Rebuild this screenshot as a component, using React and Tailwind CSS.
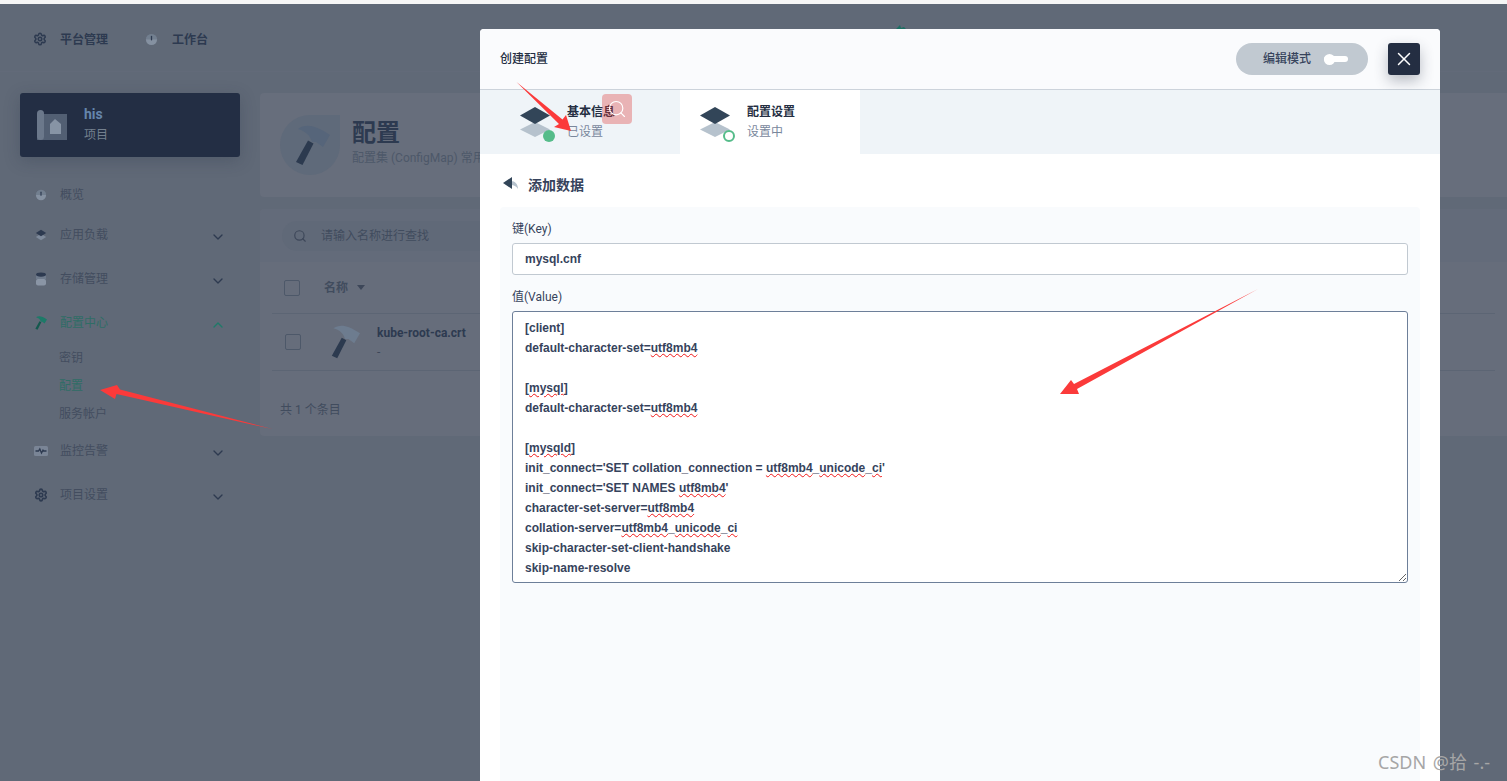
import React from "react";
import { ChevronDown, ChevronUp, Settings, Search, X } from "lucide-react";

const Hammer = ({ className, head = "#6d7c8f", handle = "#2c3a4f" }) => (
  <svg viewBox="0 0 35 41" className={className}>
    <path d="M3 4C10-1 19-1 35 10L28 22 21 17 17 17C15 10 10 6 3 4Z" fill={head} />
    <path d="M13 15.5L18.5 18.500 7.500 40 1 37Z" fill={handle} strokeLinejoin="round" />
  </svg>
);

const Dash = ({ className }) => (
  <svg viewBox="0 0 14 14" className={className}>
    <circle cx="7" cy="7" r="6" fill="#8591a1" />
    <path d="M1 7a6 6 0 0 1 12 0" fill="#4a5568" opacity=".3" />
    <rect x="6.300" y="3" width="1.400" height="5" rx=".7" fill="#2d3a50" />
  </svg>
);

const Layers = ({ className }) => (
  <svg viewBox="0 0 14 14" className={className}>
    <path d="M7 5.500L13 9.200 7 13 1 9.200Z" fill="#7e8a9b" />
    <path d="M7 1L13 4.700 7 8.500 1 4.700Z" fill="#2d3a50" />
  </svg>
);

const Db = ({ className }) => (
  <svg viewBox="0 0 12 14" className={className}>
    <rect x="1" y="7" width="10" height="6.500" rx="2" fill="#8a95a5" />
    <rect x="1" y="3" width="10" height="4" fill="#6f7b8c" />
    <ellipse cx="6" cy="2.600" rx="5" ry="2.100" fill="#2d3a50" />
  </svg>
);

const Pulse = ({ className }) => (
  <svg viewBox="0 0 14 10" className={className}>
    <rect width="14" height="10" rx="1.500" fill="#7a8596" />
    <path d="M1.500 5H4.500L5.800 3 7.500 7 9 4.200 9.800 5H12.500" fill="none" stroke="#2d3a50" strokeWidth="1.300" />
  </svg>
);

const Stack = ({ done }) => (
  <svg viewBox="0 0 38 32" className="w-[38px] h-[32px] shrink-0 overflow-visible">
    <path d="M15 16L30 23.500 15 31 0 23.500Z" fill="#b6c2cd" />
    <path d="M15 1L30 9.500 15 18 0 9.500Z" fill="#324558" />
    {done ? (
      <circle cx="29" cy="30" r="6" fill="#55bc8a" />
    ) : (
      <circle cx="29" cy="30" r="5" fill="#fff" stroke="#55bc8a" strokeWidth="2" />
    )}
  </svg>
);

const NavRow = ({ icon, label, h = "h-10", chevron, active }) => (
  <div className={`${h} flex items-center pl-[13px] pr-[14px]`}>
    <span className="w-[16px] h-[16px] flex items-center justify-center shrink-0">{icon}</span>
    <span className={`ml-[11px] flex-1 text-xs ${active ? "text-[#2f6d66]" : "text-[#434d5f]"}`}>{label}</span>
    {chevron === "down" && <ChevronDown size={16} strokeWidth={2} className="text-[#2d3a50] mt-[3px]" />}
    {chevron === "up" && <ChevronUp size={16} strokeWidth={2} className="text-[#1f7a68] mt-[3px]" />}
  </div>
);

const Sub = ({ label, active }) => (
  <div className={`h-7 flex items-center pl-[39px] text-xs ${active ? "text-[#2f6d66]" : "text-[#434d5f]"}`}>{label}</div>
);

const Err = ({ children }) => (
  <span className="underline decoration-wavy decoration-[#f01818] decoration-1 underline-offset-1">{children}</span>
);

export default function App() {
  return (
    <div className="relative w-[1507px] h-[781px] overflow-hidden bg-[#606977] font-[Roboto,'Noto_Sans_CJK_SC',sans-serif] text-xs">
      <div className="h-[4px] bg-[#f6f6f6]" />

      {/* Top bar */}
      <header className="relative h-[68px] flex items-center pl-[33px] pt-[5px] border-b border-[#626a79]">
        <Settings size={14} strokeWidth={2.6} className="text-[#2d3a50] -mt-[2px]" />
        <span className="ml-[13px] font-bold text-[#2d3a50]">平台管理</span>
        <Dash className="ml-[37px] w-[13px] h-[13px] -mt-[2px]" />
        <span className="ml-[14px] font-bold text-[#2d3a50]">工作台</span>
        <svg viewBox="0 0 12 5" className="absolute left-[895px] top-[21px] w-3 h-[5px]">
          <path d="M0 5L5 0 6 3 9 2 12 5Z" fill="#1d6f63" />
        </svg>
      </header>

      <div className="flex pt-[21px]">
        {/* Sidebar */}
        <aside className="w-[260px] pl-5 pr-5 shrink-0">
          <div className="h-16 rounded-[3px] bg-[#232e44] flex items-center pl-[17px] shadow-[0_4px_16px_rgba(36,46,66,0.25)]">
            <svg viewBox="0 0 30 30" className="w-[30px] h-[30px]">
              <rect x="0" y="4" width="30" height="26" fill="#525f73" />
              <rect x="0" y="0" width="7" height="30" rx="3.500" fill="#6b788b" />
              <path d="M18 9L24 14V24H13V14Z" fill="#8794a5" />
            </svg>
            <div className="ml-[17px] flex flex-col gap-[3px] pb-1">
              <span className="text-sm font-bold leading-5 text-[#6585ac]">his</span>
              <span className="leading-4 text-[#74808f]">项目</span>
            </div>
          </div>
          <nav className="mt-[18px]">
            <NavRow icon={<Dash className="w-3 h-3" />} label="概览" />
            <NavRow icon={<Layers className="w-3 h-3" />} label="应用负载" chevron="down" />
            <div className="h-0.5" />
            <NavRow icon={<Db className="w-3 h-[14px]" />} label="存储管理" h="h-11" chevron="down" />
            <NavRow icon={<Hammer className="w-3 h-[14px]" head="#1d7a68" handle="#14594e" />} label="配置中心" h="h-11" chevron="up" active />
            <div className="-mt-px">
              <Sub label="密钥" />
              <Sub label="配置" active />
              <Sub label="服务帐户" />
            </div>
            <div className="h-px" />
            <NavRow icon={<Pulse className="w-[14px] h-[10px]" />} label="监控告警" h="h-11" chevron="down" />
            <NavRow icon={<Settings size={14} strokeWidth={2.8} className="text-[#2d3a50]" />} label="项目设置" h="h-11" chevron="down" />
          </nav>
        </aside>

        {/* Main */}
        <main className="flex-1 min-w-0">
          <section className="h-[104px] rounded-l-[4px] bg-[#676e7c] flex pl-5">
            <div className="mt-[22px] w-[60px] h-[60px] rounded-full rounded-tr-none bg-[#5f6a7a] flex items-center justify-center">
              <Hammer className="w-[35px] h-[41px] ml-[4px]" head="#56657a" />
            </div>
            <div className="ml-3 mt-6 flex flex-col">
              <span className="text-2xl leading-8 font-bold text-[#2d3a50]">配置</span>
              <span className="mt-px leading-4 text-[#4d5869]">配置集 (ConfigMap) 常用于存储工作负载所需的配置信息</span>
            </div>
          </section>

          <section className="mt-3 h-[227px] rounded-l-[4px] bg-[#666d7b] flex flex-col">
            <div className="h-[53px] flex items-center px-[22px] bg-[#636b7a] rounded-tl-[4px]">
              <div className="w-[400px] h-[30px] rounded-full bg-[#606978] flex items-center pl-[11px]">
                <Search size={14} className="text-[#3d4759]" />
                <span className="ml-[14px] text-[#414c5e]">请输入名称进行查找</span>
              </div>
            </div>
            <div className="h-[52px] flex items-center mx-3 border-b border-[#5c6574]">
              <span className="ml-3 w-4 h-4 rounded-[2px] border border-[#4d5869]" />
              <span className="ml-6 font-bold text-[#414c5e]">名称</span>
              <span className="ml-[9px] w-0 h-0 border-x-4 border-x-transparent border-t-[5px] border-t-[#3d4759]" />
            </div>
            <div className="h-[57px] flex items-center mx-3 border-b border-[#5c6574]">
              <span className="ml-[13px] w-4 h-4 rounded-[2px] border border-[#4d5869]" />
              <Hammer className="ml-[30px] w-[29px] h-[34px]" />
              <div className="ml-[17px] flex flex-col gap-[3px]">
                <span className="font-bold leading-4 text-[#2d3a50]">kube-root-ca.crt</span>
                <span className="leading-4 text-[#3d4759]">-</span>
              </div>
            </div>
            <div className="flex-1 flex items-center pl-5 pt-3 text-[#414c5e]">共 1 个条目</div>
          </section>
        </main>
      </div>

      {/* Create config modal */}
      <div className="absolute left-[480px] top-[29px] bottom-0 w-[960px] rounded-t-[4px] bg-white flex flex-col overflow-hidden">
        <div className="h-[61px] shrink-0 bg-[#fafbfd] border-b border-[#ccd3db] flex items-center pl-5 pr-5">
          <span className="flex-1 text-[#242e42] font-medium">创建配置</span>
          <div className="w-[132px] h-8 rounded-full bg-[#c1c9d1] flex items-center pl-[27px]">
            <span className="text-[#36435c] font-medium">编辑模式</span>
            <span className="relative ml-[13px] w-6 h-[6px] rounded-full bg-white">
              <span className="absolute left-0 -top-[2.500px] w-[11px] h-[11px] rounded-full bg-white" />
            </span>
          </div>
          <button className="ml-5 w-8 h-8 rounded-[3px] bg-[#242e42] flex items-center justify-center shadow-[0_6px_14px_rgba(36,46,66,0.3)]">
            <X size={22} strokeWidth={1.6} className="text-white" />
          </button>
        </div>

        <div className="h-16 shrink-0 bg-[#eff4f8] flex">
          <div className="w-[200px] pl-10 flex items-center">
            <Stack done />
            <div className="ml-[9px] flex flex-col gap-1">
              <span className="leading-4 font-bold text-[#242e42]">基本信息</span>
              <span className="leading-4 text-[#79879c]">已设置</span>
            </div>
          </div>
          <div className="w-[180px] bg-white pl-5 flex items-center">
            <Stack />
            <div className="ml-[9px] flex flex-col gap-1">
              <span className="leading-4 font-bold text-[#242e42]">配置设置</span>
              <span className="leading-4 text-[#79879c]">设置中</span>
            </div>
          </div>
        </div>

        <div className="h-[53px] shrink-0 flex items-center pl-[23px] pt-2">
          <svg viewBox="0 0 16 14" className="w-4 h-[14px] -mt-px">
            <path d="M8 4C12 4 15 7 15 12 13 9 11 8 8 8Z" fill="#b6c2cd" />
            <path d="M9 0V12L0 6Z" fill="#324558" />
          </svg>
          <span className="ml-[9px] text-sm text-[#36435c] font-bold">添加数据</span>
        </div>

        <div className="flex-1 mx-5 rounded-t-[4px] bg-[#f9fbfd] px-3 pt-[14px]">
          <div className="leading-4 text-[#36435c]">键(Key)</div>
          <div className="mt-[6px] h-8 rounded-[3px] border border-[#c1c9d1] bg-white flex items-center pl-3 font-['Liberation_Sans',Arial,sans-serif] font-bold text-[#36435c]">
            mysql.cnf
          </div>
          <div className="mt-[14px] leading-4 text-[#36435c]">值(Value)</div>
          <div className="mt-[6px] h-[272px] rounded-[3px] border border-[#6d7f99] bg-white px-3 pt-[6px] font-['Liberation_Sans',Arial,sans-serif] font-bold leading-5 text-[#36435c] whitespace-pre resize overflow-auto">
            <div>[client]</div>
            <div>default-character-set=<Err>utf8mb4</Err></div>
            <div className="h-5" />
            <div>[<Err>mysql</Err>]</div>
            <div>default-character-set=<Err>utf8mb4</Err></div>
            <div className="h-5" />
            <div>[<Err>mysqld</Err>]</div>
            <div>init_connect='SET collation_connection = <Err>utf8mb4</Err>_<Err>unicode</Err>_<Err>ci</Err>'</div>
            <div>init_connect='SET NAMES <Err>utf8mb4</Err>'</div>
            <div>character-set-server=<Err>utf8mb4</Err></div>
            <div>collation-server=<Err>utf8mb4</Err>_<Err>unicode</Err>_<Err>ci</Err></div>
            <div>skip-character-set-client-handshake</div>
            <div>skip-name-resolve</div>
          </div>
        </div>
      </div>

      {/* Floating search button */}
      <div className="absolute left-[602px] top-[94px] w-[30px] h-[30px] rounded-[4px] bg-[#e03a3a]/35 flex items-center justify-center">
        <Search size={20} strokeWidth={1.4} className="text-white" />
      </div>

      {/* Hand-drawn annotation arrows */}
      <svg className="absolute inset-0 w-[1507px] h-[781px] pointer-events-none" viewBox="0 0 1507 781">
        <path d="M272 429L120 389.500 117 385 100 390 115 399 116.500 394Z" fill="#fb3a3a" />
        <path d="M516.500 82L559 124 554 127 571 131 566 115 562.500 119.500Z" fill="#fb3a3a" />
        <path d="M1258 289L1074 384 1071 380 1060 394 1079 394 1077 389Z" fill="#fb3a3a" />
      </svg>

      {/* Watermark */}
      <div className="absolute left-[1378px] top-[750px] text-lg leading-6 text-[#a6a6a6] [word-spacing:2px] font-['Noto_Sans','Noto_Sans_CJK_SC',sans-serif]">
        CSDN @拾 -.-
      </div>
    </div>
  );
}
